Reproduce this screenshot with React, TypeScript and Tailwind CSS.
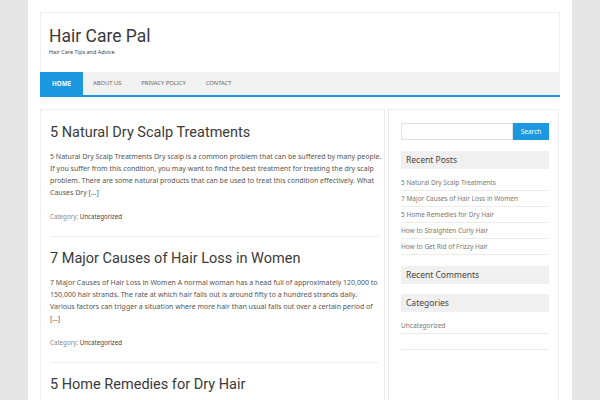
import type React from "react";

const posts = [
	{
		title: "5 Natural Dry Scalp Treatments",
		excerpt:
			"5 Natural Dry Scalp Treatments Dry scalp is a common problem that can be suffered by many people. If you suffer from this condition, you may want to find the best treatment for treating the dry scalp problem. There are some natural products that can be used to treat this condition effectively. What Causes Dry […]",
	},
	{
		title: "7 Major Causes of Hair Loss in Women",
		excerpt:
			"7 Major Causes of Hair Loss in Women A normal woman has a head full of approximately 120,000 to 150,000 hair strands. The rate at which hair falls out is around fifty to a hundred strands daily. Various factors can trigger a situation where more hair than usual falls out over a certain period of […]",
	},
	{
		title: "5 Home Remedies for Dry Hair",
		excerpt:
			"5 Home Remedies for Dry Hair Dry hair can be caused by many things, and there are several easy ways to bring moisture back to your hair at home.",
	},
];

const recent = [
	"5 Natural Dry Scalp Treatments",
	"7 Major Causes of Hair Loss in Women",
	"5 Home Remedies for Dry Hair",
	"How to Straighten Curly Hair",
	"How to Get Rid of Frizzy Hair",
];

const nav = ["About Us", "Privacy Policy", "Contact"];

const heading = { fontFamily: 'Roboto, "Noto Sans", sans-serif' };

const WidgetTitle = ({ children }: { children: React.ReactNode }) => (
	<h3 className="h-[18px] bg-[#f0f0f0] pl-[5px] flex items-center text-[8.5px] text-[#444]">
		{children}
	</h3>
);

const WidgetItem = ({ children }: { children?: React.ReactNode }) => (
	<li className="h-[16px] border-b border-[#ececec] flex items-center text-[6.5px] text-[#777]">
		{children}
	</li>
);

export default function App() {
	return (
		<div
			className="min-h-screen bg-[#e6e6e6]"
			style={{ fontFamily: '"Noto Sans", "Open Sans", sans-serif' }}
		>
			<div className="mx-auto w-[544px] h-[400px] overflow-hidden bg-white px-3 pt-3">
				<header className="border border-[#eee] border-b-0">
					<div className="pl-2 pt-[11px]">
						<h1
							className="text-[17.5px] leading-[24px] text-[#3a3a3a]"
							style={heading}
						>
							Hair Care Pal
						</h1>
						<p className="text-[5.5px] leading-[8px] text-[#444]">
							Hair Care Tips and Advice
						</p>
					</div>
					<nav className="mt-4 flex h-[25px] bg-[#f2f2f2] border-b-2 border-[#1b98e0] -mx-px">
						<a className="flex items-center px-[12px] bg-[#1b98e0] text-white font-bold text-[6.2px] uppercase">
							Home
						</a>
						{nav.map((n) => (
							<a
								key={n}
								className="flex items-center px-[10px] text-[#666] text-[5.8px] uppercase"
							>
								{n}
							</a>
						))}
					</nav>
				</header>

				<div className="mt-3 flex gap-[3px]">
					<main className="w-[345px] border border-[#eee] pl-[9px] pr-[1px]">
						{posts.map((p, i) => (
							<article
								key={p.title}
								className={`pb-[13px] border-b border-[#eee] mr-[5px] ${i === 0 ? "pt-[13px]" : "pt-[12px]"}`}
							>
								<h2
									className="text-[14.5px] leading-[20px] text-[#3a3a3a]"
									style={heading}
								>
									{p.title}
								</h2>
								<p className="mt-2 text-[7px] leading-[12px] text-[#555] -mr-[5px]">
									{p.excerpt}
								</p>
								<p className="mt-3 text-[6.2px] leading-[12px] text-[#888]">
									Category: <span className="text-[#444]">Uncategorized</span>
								</p>
							</article>
						))}
					</main>

					<aside className="w-[171px] border border-[#eee] pl-3 pr-[9px] pt-[13px] h-[320px]">
						<div className="flex h-[17px]">
							<input
								className="flex-1 min-w-0 border border-[#e2e2e2] outline-none"
								type="text"
							/>
							<button
								type="button"
								className="w-[36px] bg-[#1b98e0] text-white text-[6.5px]"
							>
								Search
							</button>
						</div>

						<div className="mt-[11px]">
							<WidgetTitle>Recent Posts</WidgetTitle>
							<ul className="mt-[6px]">
								{recent.map((r) => (
									<WidgetItem key={r}>{r}</WidgetItem>
								))}
							</ul>
						</div>

						<div className="mt-[11px]">
							<WidgetTitle>Recent Comments</WidgetTitle>
						</div>

						<div className="mt-[10px]">
							<WidgetTitle>Categories</WidgetTitle>
							<ul className="mt-[6px]">
								<WidgetItem>Uncategorized</WidgetItem>
								<WidgetItem />
							</ul>
						</div>
					</aside>
				</div>
			</div>
		</div>
	);
}
